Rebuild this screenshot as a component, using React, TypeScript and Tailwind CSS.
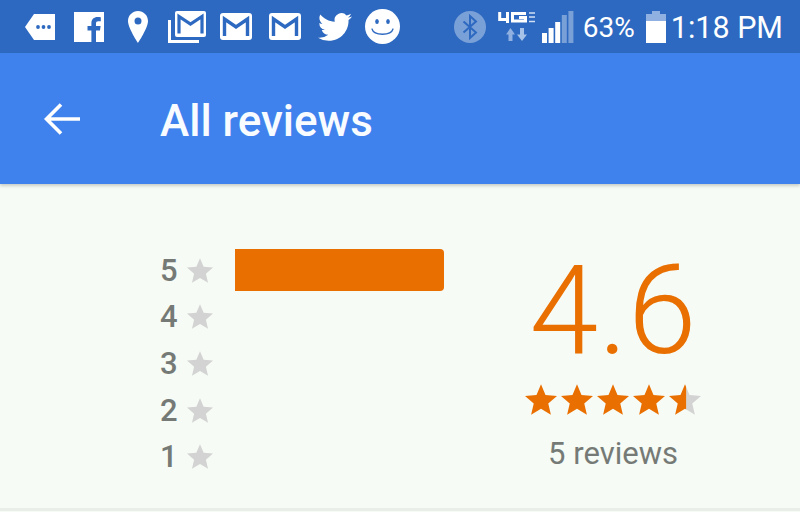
const STAR = "M12 17.270 18.180 21 16.540 13.970 22 9.240 14.810 8.630 12 2 9.190 8.630 2 9.240 7.460 13.970 5.820 21Z";

const Star = ({ className, half }: { className?: string; half?: boolean }) => (
  <svg viewBox="2 2 20 19" className={className}>
    {half && (
      <defs>
        <clipPath id="half-left"><rect x="0" y="0" width="12.700" height="24" /></clipPath>
        <clipPath id="half-right"><rect x="12.700" y="0" width="12" height="24" /></clipPath>
      </defs>
    )}
    <path d={STAR} fill={half ? "#d2d3d2" : "currentColor"} clipPath={half ? "url(#half-right)" : undefined} />
    {half && <path d={STAR} fill="currentColor" clipPath="url(#half-left)" />}
  </svg>
);

const Mail = ({ className }: { className?: string }) => (
  <svg viewBox="0 0 32 27" className={className}>
    <rect x="0" y="0" width="32" height="27" rx="3" fill="#fff" />
    <path d="M4.500 23V6L16 14 27.500 6V23" fill="none" stroke="#2d69c0" strokeWidth="3.400" />
  </svg>
);

function LeftIcons() {
  return (
    <div className="flex items-center">
      <svg viewBox="0 0 30 26" className="ml-[25px] w-[30px] h-[26px]">
        <path d="M9 0H30V26H9L0 13Z" fill="#fff" />
        <circle cx="13" cy="13" r="1.900" fill="#2d69c0" />
        <circle cx="18.500" cy="13" r="1.900" fill="#2d69c0" />
        <circle cx="24" cy="13" r="1.900" fill="#2d69c0" />
      </svg>
      <svg viewBox="0 0 30 30" className="ml-[19px] w-[30px] h-[30px]">
        <path fillRule="evenodd" d="M0 0H30V30H22V18.500H26L26.600 14H22V11.500C22 10 22.600 9.200 24.300 9.200H26.800V5.200C26 5.100 24.900 5 23.500 5 20 5 17.400 7.200 17.400 11V14H13.500V18.500H17.400V30H0Z" fill="#fff" />
      </svg>
      <svg viewBox="0 0 20 32" className="ml-[24px] w-[20px] h-[32px]">
        <path fillRule="evenodd" d="M10 0C4.500 0 0 4.400 0 10C0 17 10 32 10 32S20 17 20 10C20 4.400 15.500 0 10 0ZM10 13.500A3.500 3.500 0 1 1 10 6.500 3.500 3.500 0 0 1 10 13.500Z" fill="#fff" />
      </svg>
      <svg viewBox="0 0 38 32" className="ml-[20px] w-[38px] h-[32px]">
        <path d="M1.500 9V30.500H31" fill="none" stroke="#fff" strokeWidth="3" />
        <rect x="7" y="0" width="31" height="26" rx="2" fill="#fff" />
        <path d="M11 22.500V5.500L22.500 13 34 5.500V22.500" fill="none" stroke="#2d69c0" strokeWidth="3.200" />
      </svg>
      <Mail className="ml-[14px] w-[32px] h-[27px]" />
      <Mail className="ml-[17px] w-[32px] h-[27px]" />
      <svg viewBox="0 0 24 24" className="ml-[17px] w-[34px] h-[34px]">
        <path d="M23.950 4.570a10 10 0 0 1-2.820.775 4.958 4.958 0 0 0 2.163-2.723c-.951.555-2.005.959-3.127 1.184a4.920 4.920 0 0 0-8.384 4.482C7.690 8.095 4.067 6.130 1.640 3.162a4.822 4.822 0 0 0-.666 2.475c0 1.710.870 3.213 2.188 4.096a4.904 4.904 0 0 1-2.228-.616v.060a4.923 4.923 0 0 0 3.946 4.827 4.996 4.996 0 0 1-2.212.085 4.936 4.936 0 0 0 4.604 3.417 9.867 9.867 0 0 1-6.102 2.105c-.390 0-.779-.023-1.170-.067a13.995 13.995 0 0 0 7.557 2.209c9.053 0 13.998-7.496 13.998-13.985 0-.210 0-.420-.015-.630A9.935 9.935 0 0 0 24 4.590z" fill="#fff" />
      </svg>
      <svg viewBox="0 0 35 35" className="ml-[13px] w-[35px] h-[35px]">
        <circle cx="17.500" cy="17.500" r="17.500" fill="#fff" />
        <ellipse cx="12" cy="12.500" rx="1.800" ry="2.600" fill="#2d69c0" />
        <ellipse cx="23" cy="12.500" rx="1.800" ry="2.600" fill="#2d69c0" />
        <path d="M7 20C9 27 26 27 28 20" fill="none" stroke="#2d69c0" strokeWidth="1.300" strokeLinecap="round" />
      </svg>
    </div>
  );
}

function RightIcons() {
  return (
    <div className="flex items-center">
      <svg viewBox="0 0 32 32" className="w-[32px] h-[32px]">
        <circle cx="16" cy="16" r="16" fill="#7aa0d8" />
        <path d="M9.500 10.500 22 21.500 16 27V5L22 10.500 9.500 21.500" fill="none" stroke="#2d69c0" strokeWidth="2" />
      </svg>
      <svg viewBox="0 0 38 30" className="ml-[12px] w-[38px] h-[30px]">
        <path d="M1.700 0V7.500H11M9.500 0V11" fill="none" stroke="#fff" strokeWidth="3" />
        <path d="M28 1.500H14.500V9H27.500V5.500H21" fill="none" stroke="#fff" strokeWidth="3" />
        <path d="M31 1H37M31 5H37M31 9.500H37" fill="none" stroke="#cfe0f5" strokeWidth="1.500" />
        <path d="M12.500 16 8 22.500H10.500V29H14.500V22.500H17Z" fill="#8fb0e0" />
        <path d="M24 29 29 22.500H26V16H22V22.500H19Z" fill="#a6c2e8" />
      </svg>
      <svg viewBox="0 0 32 32" className="ml-[6px] w-[32px] h-[32px]">
        <rect x="0" y="22" width="5" height="10" fill="#fff" />
        <rect x="6.600" y="17" width="5" height="15" fill="#fff" />
        <rect x="13.200" y="11" width="5" height="21" fill="#fff" />
        <rect x="19.800" y="4" width="5" height="28" fill="#7aa0d8" />
        <rect x="26.400" y="0" width="5" height="32" fill="#7aa0d8" />
      </svg>
      <span className="ml-[9px] pt-[3px] text-[28px] leading-none text-white">63%</span>
      <svg viewBox="0 0 20 32" className="ml-[11px] w-[20px] h-[32px] mt-[1px]">
        <path d="M6 0H14V3H20V32H0V3H6Z" fill="#8fb0e0" />
        <rect x="0" y="10" width="20" height="22" fill="#fff" />
      </svg>
      <span className="ml-[5px] mr-[17px] pt-[3px] text-[30.500px] leading-none text-white">1:18 PM</span>
    </div>
  );
}

export default function App() {
  return (
    <div className="w-[800px] h-[512px] flex flex-col overflow-hidden bg-[#f6fbf5] font-['Roboto',sans-serif]">
      <div className="h-[53px] shrink-0 bg-[#2d69c0] flex items-center justify-between">
        <LeftIcons />
        <RightIcons />
      </div>
      <div className="h-[131px] shrink-0 bg-[#3f82ee] flex items-center shadow-[0_2px_3px_rgba(0,0,0,0.18)] z-10">
        <svg viewBox="0 0 36 32" className="ml-[44px] w-[36px] h-[32px]">
          <path d="M36 16H2M17 1.500 2.500 16 17 30.500" fill="none" stroke="#fff" strokeWidth="3.600" />
        </svg>
        <span className="ml-[80px] pt-[5px] text-[44px] leading-none font-medium text-[#f8fbff]">All reviews</span>
      </div>
      <div className="h-[327px] shrink-0 flex items-start border-b-[3px] border-[#e9efe8]">
        <div className="ml-[160px] mt-[63px] flex flex-col w-[53px]">
          {[5, 4, 3, 2, 1].map((n) => (
            <div key={n} className="h-[46.6px] flex items-center justify-between">
              <span className="text-[31px] leading-none font-medium text-[#757a76]">{n}</span>
              <Star className="w-[26px] h-[25px] text-[#d2d3d2]" />
            </div>
          ))}
        </div>
        <div className="ml-[22px] mt-[65px] w-[209px] h-[42px] bg-[#e96f00] rounded-r-[4px]" />
        <div className="ml-[82px] mt-[65px] w-[174px] flex flex-col items-center">
          <div className="text-[124px] leading-[124px] font-light text-[#e96f00]">4.6</div>
          <div className="mt-[11px] flex gap-[4px]">
            <Star className="w-[32px] h-[31px] text-[#e96f00]" />
            <Star className="w-[32px] h-[31px] text-[#e96f00]" />
            <Star className="w-[32px] h-[31px] text-[#e96f00]" />
            <Star className="w-[32px] h-[31px] text-[#e96f00]" />
            <Star half className="w-[32px] h-[31px] text-[#e96f00]" />
          </div>
          <div className="mt-[23px] text-[31px] leading-none text-[#757a76]">5 reviews</div>
        </div>
      </div>
    </div>
  );
}
